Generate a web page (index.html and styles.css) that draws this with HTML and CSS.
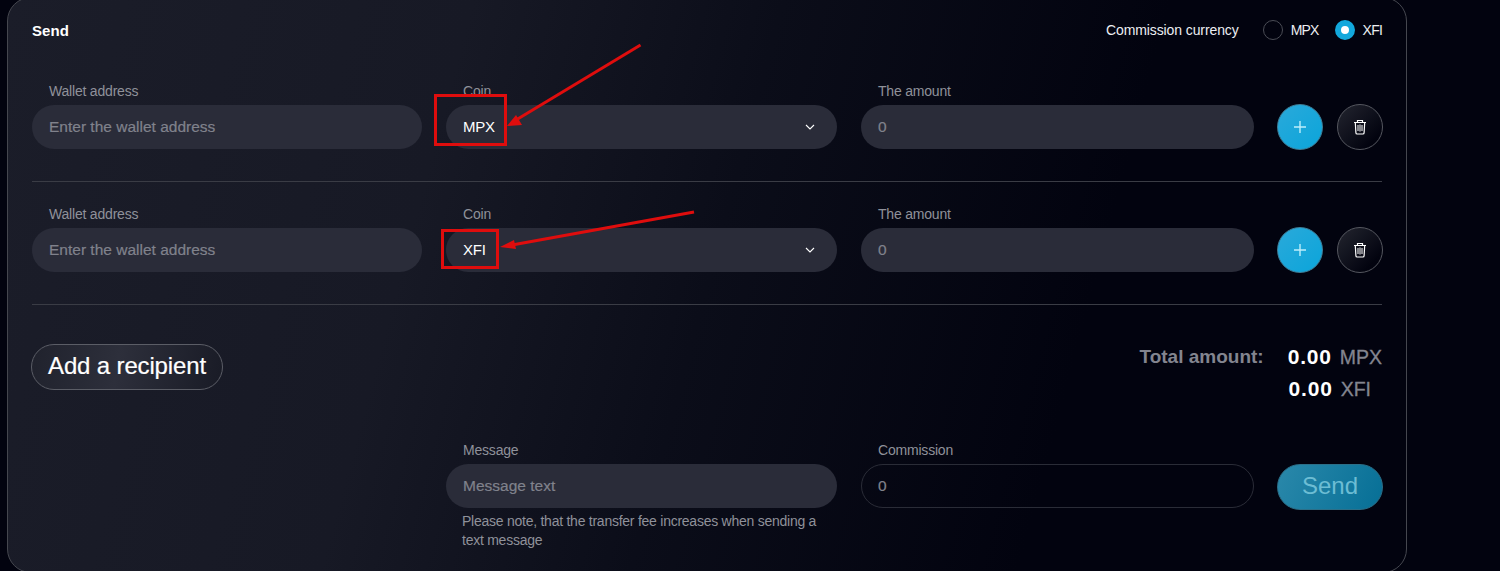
FILE: index.html
```html
<!DOCTYPE html>
<html lang="en">
<head>
  <meta charset="UTF-8">
  <title>Send</title>
  <link rel="stylesheet" href="styles.css">
</head>
<body>

  <div class="panel">
    <div class="panel-head">
      <h2>Send</h2>
      <div class="currency">
        <span class="currency-title">Commission currency</span>
        <span class="radio"></span>
        <span class="radio-label first">MPX</span>
        <span class="radio on"></span>
        <span class="radio-label">XFI</span>
      </div>
    </div>

    <div class="recipient">
      <div class="field">
        <label>Wallet address</label>
        <input type="text" placeholder="Enter the wallet address">
      </div>
      <div class="field">
        <label>Coin</label>
        <div class="select">
          <span>MPX</span>
          <svg width="10" height="6" viewBox="0 0 10 6"><path d="M1 1l4 4 4-4" fill="none" stroke="#fff" stroke-width="1.1"/></svg>
        </div>
      </div>
      <div class="field">
        <label>The amount</label>
        <input type="text" placeholder="0">
      </div>
      <div class="actions">
        <button class="round add">
          <svg width="14" height="14" viewBox="0 0 14 14"><path d="M7 1v12M1 7h12" stroke="#bdeefb" stroke-width="1.4"/></svg>
        </button>
        <button class="round trash">
          <svg width="14" height="16" viewBox="0 0 14 16" fill="none" stroke="#fff"><path d="M1 3.500h12M4.500 3V1.500h5V3" stroke-width="1.2"/><path d="M2.300 3.500l.6 10.200c0 .8.6 1.300 1.300 1.300h5.600c.7 0 1.300-.5 1.300-1.300l.6-10.200" stroke-width="1.2"/><path d="M5 6v6M7 5.500v7M9 6v6" stroke-width="1"/></svg>
        </button>
      </div>
    </div>

    <div class="recipient">
      <div class="field">
        <label>Wallet address</label>
        <input type="text" placeholder="Enter the wallet address">
      </div>
      <div class="field">
        <label>Coin</label>
        <div class="select">
          <span>XFI</span>
          <svg width="10" height="6" viewBox="0 0 10 6"><path d="M1 1l4 4 4-4" fill="none" stroke="#fff" stroke-width="1.1"/></svg>
        </div>
      </div>
      <div class="field">
        <label>The amount</label>
        <input type="text" placeholder="0">
      </div>
      <div class="actions">
        <button class="round add">
          <svg width="14" height="14" viewBox="0 0 14 14"><path d="M7 1v12M1 7h12" stroke="#bdeefb" stroke-width="1.4"/></svg>
        </button>
        <button class="round trash">
          <svg width="14" height="16" viewBox="0 0 14 16" fill="none" stroke="#fff"><path d="M1 3.500h12M4.500 3V1.500h5V3" stroke-width="1.2"/><path d="M2.300 3.500l.6 10.200c0 .8.6 1.300 1.300 1.300h5.600c.7 0 1.300-.5 1.300-1.300l.6-10.200" stroke-width="1.2"/><path d="M5 6v6M7 5.500v7M9 6v6" stroke-width="1"/></svg>
        </button>
      </div>
    </div>

    <div class="summary">
      <button class="add-recipient">Add a recipient</button>
      <div class="totals">
        <div class="total-row">
          <span class="total-title">Total amount:</span>
          <span class="total-value">0.00</span>
          <span class="total-coin">MPX</span>
        </div>
        <div class="total-row second">
          <span class="total-value">0.00</span>
          <span class="total-coin">XFI</span>
        </div>
      </div>
    </div>

    <div class="message-row">
      <div class="field message">
        <label>Message</label>
        <input type="text" placeholder="Message text">
        <p class="note">Please note, that the transfer fee increases when sending a text message</p>
      </div>
      <div class="field commission">
        <label>Commission</label>
        <input type="text" placeholder="0">
      </div>
      <button class="send">Send</button>
    </div>
  </div>

  <!-- red marks drawn on top of the screenshot -->
  <svg class="marks" width="1500" height="571" viewBox="0 0 1500 571">
    <g fill="none" stroke="#df0d0d" stroke-width="3">
      <rect x="435.500" y="95.500" width="70" height="49"/>
      <rect x="442.500" y="230.500" width="55" height="37"/>
      <path d="M640.500 45L516 120"/>
      <path d="M694 212L512 245"/>
    </g>
    <path d="M507 126L516 115L522 125Z" fill="#df0d0d"/>
    <path d="M500 247L514 240L516 249Z" fill="#df0d0d"/>
  </svg>

</body>
</html>
```

FILE: styles.css
```css
body {
  margin: 0;
  height: 571px;
  overflow: hidden;
  background-color: #02030f;
  font-family: "Liberation Sans", Arial, sans-serif;
  color: white;
}

.panel {
  box-sizing: border-box;
  width: 1400px;
  height: 576px;
  margin: -3px 0 0 7px;
  padding: 3px 24px 0 24px;
  border: 1px solid #45474f;
  border-radius: 24px;
  background: linear-gradient(105deg, #1b1d29 0%, #171925 30%, #0b0d19 50%, #02030f 75%, #02030f 100%);
}

/* cabecalho */
.panel-head {
  display: flex;
  justify-content: space-between;
  align-items: center;
  height: 58px;
}

.panel-head h2 {
  margin: 0;
  font-size: 15px;
  letter-spacing: 0.1px;
}

.currency {
  display: flex;
  align-items: center;
  font-size: 14px;
  color: #eceef2;
}

.currency-title {
  margin-right: 24px;
  letter-spacing: -0.1px;
}

.radio {
  box-sizing: border-box;
  width: 20px;
  height: 20px;
  border: 1px solid #4a4c55;
  border-radius: 50%;
}

.radio.on {
  border: 6px solid #12a8dc;
  background-color: white;
}

.radio-label {
  margin-left: 8px;
  letter-spacing: -0.8px;
}

.radio-label.first {
  margin-right: 16px;
}

/* linhas */
.recipient {
  display: grid;
  grid-template-columns: 390px 391px 393px 104px;
  column-gap: 24px;
  padding: 22px 0 32px;
  border-bottom: 1px solid #3a3c45;
}

.field {
  display: flex;
  flex-direction: column;
}

label {
  height: 20px;
  margin: 0 0 4px 17px;
  font-size: 14px;
  line-height: 20px;
  letter-spacing: -0.2px;
  color: #8f919a;
}

input {
  box-sizing: border-box;
  width: 100%;
  height: 44px;
  padding: 0 16px;
  border: 1px solid transparent;
  border-radius: 22px;
  outline: none;
  background-color: #2a2c39;
  font-family: inherit;
  font-size: 15.500px;
  color: white;
}

input::placeholder {
  color: #80828c;
  opacity: 1;
  -webkit-text-stroke: 0.2px #80828c;
}

.select {
  display: flex;
  justify-content: space-between;
  align-items: center;
  box-sizing: border-box;
  height: 44px;
  padding: 0 22px 1px 17px;
  border-radius: 22px;
  background-color: #2a2c39;
  font-size: 15px;
  letter-spacing: -0.2px;
}

.actions {
  display: flex;
  justify-content: flex-end;
  gap: 14px;
  margin: 23px -1px -1px -1px;
}

.round {
  display: flex;
  justify-content: center;
  align-items: center;
  box-sizing: border-box;
  width: 46px;
  height: 46px;
  padding: 0;
  border-radius: 50%;
  cursor: pointer;
}

.round.add {
  border: 1px solid #3f7f98;
  background: linear-gradient(135deg, #2aa9da, #0ba5da);
}

.round.trash {
  border: 1px solid #55575f;
  background: linear-gradient(135deg, #23252f, #02030f 80%);
}

/* resumo */
.summary {
  display: flex;
  justify-content: space-between;
  align-items: flex-start;
  height: 96px;
  padding-top: 39px;
}

.add-recipient {
  box-sizing: border-box;
  width: 192px;
  height: 46px;
  margin-left: -1px;
  padding: 0 0 2px;
  border: 1px solid #5b5d66;
  border-radius: 23px;
  background: linear-gradient(100deg, #20222d, #2d2f3b 45%, #191b26);
  font-family: inherit;
  font-size: 24px;
  letter-spacing: -0.15px;
  color: white;
  -webkit-text-stroke: 0.2px white;
  cursor: pointer;
}

.totals {
  margin-top: -3px;
}

.total-row {
  display: flex;
  justify-content: flex-end;
  align-items: center;
  height: 32px;
  font-size: 19px;
  font-weight: bold;
}

.total-row.second {
  margin-right: 11px;
}

.total-title {
  margin-right: 24px;
  color: #83858f;
}

.total-value {
  font-size: 21px;
  letter-spacing: 0.8px;
}

.total-coin {
  margin-left: 8px;
  font-size: 19.500px;
  font-weight: normal;
  color: #83858f;
  -webkit-text-stroke: 0.3px #83858f;
}

/* mensagem */
.message-row {
  display: grid;
  grid-template-columns: 391px 393px 104px;
  column-gap: 24px;
  margin-left: 414px;
}

.note {
  margin: 4px 0 0 16px;
  font-size: 14px;
  line-height: 19px;
  letter-spacing: -0.25px;
  color: #8f919a;
}

.commission input {
  border-color: #2a2c37;
  background-color: transparent;
}

.send {
  align-self: start;
  width: 106px;
  height: 46px;
  margin: 24px 0 0 -1px;
  padding: 0 0 3px;
  border: 1px solid #2c6f88;
  border-radius: 23px;
  background: linear-gradient(115deg, #2a88aa, #066f96);
  font-family: inherit;
  font-size: 24px;
  color: #6dbdd4;
  cursor: pointer;
}

.marks {
  position: absolute;
  top: 0;
  left: 0;
  pointer-events: none;
}
```
